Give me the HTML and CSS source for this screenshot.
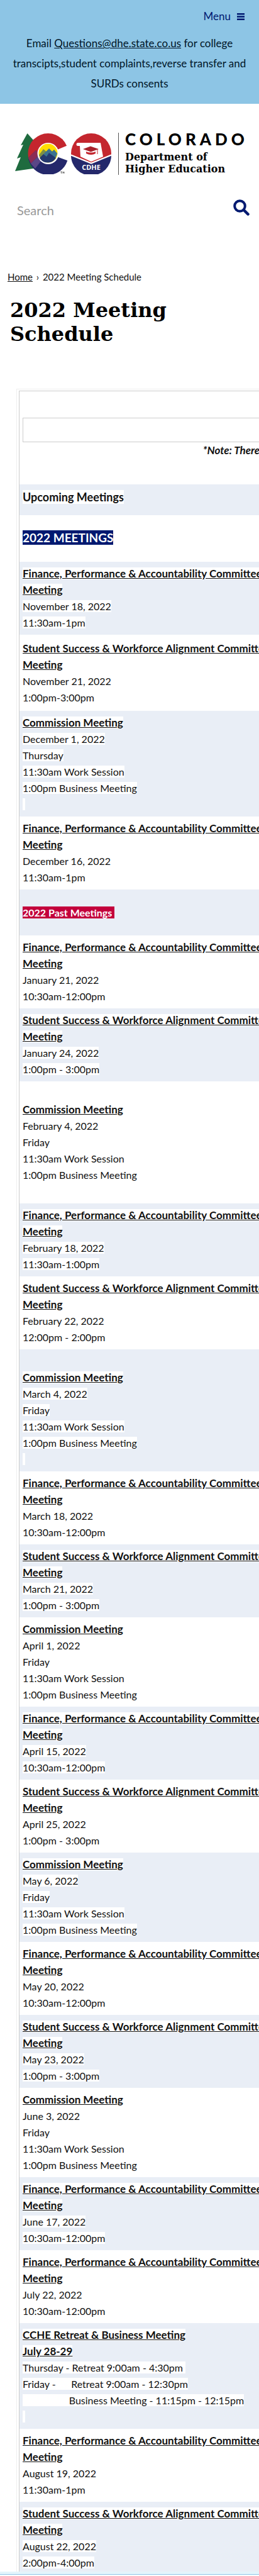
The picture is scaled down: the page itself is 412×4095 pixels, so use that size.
FILE: index.html
```html
<!DOCTYPE html>
<html lang="en">
<head>
<meta charset="utf-8">
<meta name="viewport" content="width=device-width, initial-scale=1">
<title>2022 Meeting Schedule</title>
<link rel="stylesheet" href="styles.css">
</head>
<body>
<header>
  <div class="topbar">
    <button class="menu" type="button">Menu
      <svg width="12" height="11" viewBox="0 0 12 11" aria-hidden="true"><path d="M0 0h12v2.4H0zM0 4.3h12v2.4H0zM0 8.6h12V11H0z" fill="#001970"/></svg>
    </button>
    <p class="notice">Email <a href="mailto:Questions@dhe.state.co.us">Questions@dhe.state.co.us</a> for college transcipts,student complaints,reverse transfer and SURDs consents</p>
  </div>
  <a class="brand" href="#" aria-label="Colorado Department of Higher Education">
    <svg class="marks" viewBox="25 211 155 66" aria-hidden="true">
      <path d="M44.5 212 34 231l4-1-10 22 6-2-9 22 35-5 4-40-7-1z" fill="#1f6b3f"/>
      <circle cx="77.5" cy="244" r="32" fill="#c4262e"/>
      <path d="M46 251 58 239l10 10h42l-2 7a32 32 0 0 1-62-5z" fill="#24286b"/>
      <path d="M46 251 58 239l7 6-15 15z" fill="#8b2c55"/>
      <path d="M50 260 65 245l5 6-13 17z" fill="#5a4686"/>
      <path d="M77.5 244 116 228v30z" fill="#fff"/>
      <circle cx="77.5" cy="244" r="17" fill="#fff"/>
      <circle cx="77.5" cy="243.5" r="15" fill="#fd0"/>
      <path d="M62.5 247 70 237l6 5 3-5 5 4 3-3 5 6a15 15 0 0 1-29 3z" fill="#7d9045"/>
      <path d="M70 245 79 236l5 5 3-3 5 6-4 9H72z" fill="#3c7390"/>
      <path d="M64 251 70 245l5 4 4-6 11 8a15 15 0 0 1-26 0z" fill="#24386e"/>
      <path d="M97 273h3M98.5 273v3M101 276v-3l1 1.5 1-1.5v3" fill="none" stroke="#222" stroke-width=".6"/>
      <circle cx="146" cy="244" r="32" fill="#c4262e"/>
      <path d="M114 247 146 260 178 247a32 32 0 0 1-64 0z" fill="#24286b"/>
      <path d="M114 246.500 146 259.500 178 246.500" fill="none" stroke="#fff" stroke-width="2.2"/>
      <path d="M127 227h34l4 22-19 8-17-8-1-17h-3a2 2 0 0 1 0-5z" fill="#fff"/>
      <path d="M133 237 145 232.500 158 237 145.500 241.500z" fill="#a8222b"/>
      <path d="M138 241q7.500 3 15 0v3q-7 4-15 0z" fill="#c4262e"/>
      <path d="M156 237v8" stroke="#c4262e"/>
      <text class="seal" x="146" y="270" text-anchor="middle">CDHE</text>
    </svg>
    <span class="wordmark"><span class="state">COLORADO</span><span class="dept">Department of<br>Higher Education</span></span>
  </a>
  <form class="search" role="search">
    <input type="search" placeholder="Search" aria-label="Search">
    <button type="submit" aria-label="Submit search"><svg width="26" height="26" viewBox="0 0 26 26"><circle cx="10.500" cy="10.500" r="8.300" fill="none" stroke="#001970" stroke-width="4"/><path d="M17 17l6.500 6.500" stroke="#001970" stroke-width="4.500" stroke-linecap="round"/></svg></button>
  </form>
</header>
<main>
  <nav class="crumbs" aria-label="Breadcrumb"><a href="#">Home</a> <i>›</i> 2022 Meeting Schedule</nav>
  <h1>2022 Meeting<br>Schedule</h1>
  <div class="frame">
    <table>
      <tbody>
        <tr class="intro"><td><div class="blank"></div><p>*Note: There</p></td></tr>
        <tr class="upcoming"><td><strong>Upcoming Meetings</strong></td></tr>
        <tr class="section"><td><h2>2022 MEETINGS</h2></td></tr>
        <tr><td><span><b>Finance, Performance &amp; Accountability Committee<br>Meeting</b><br>November 18, 2022<br>11:30am-1pm</span></td></tr>
        <tr class="spaced"><td><span><b>Student Success &amp; Workforce Alignment Committee<br>Meeting</b><br>November 21, 2022<br>1:00pm-3:00pm</span></td></tr>
        <tr><td><span><b>Commission Meeting</b><br>December 1, 2022<br>Thursday<br>11:30am Work Session<br>1:00pm Business Meeting<br>&nbsp;</span></td></tr>
        <tr><td><span><b>Finance, Performance &amp; Accountability Committee<br>Meeting</b><br>December 16, 2022<br>11:30am-1pm</span></td></tr>
        <tr class="past"><td><h3>2022 Past Meetings&nbsp;</h3></td></tr>
        <tr><td><span><b>Finance, Performance &amp; Accountability Committee<br>Meeting</b><br>January 21, 2022<br>10:30am-12:00pm</span></td></tr>
        <tr><td><span><b>Student Success &amp; Workforce Alignment Committee<br>Meeting</b><br>January 24, 2022<br>1:00pm - 3:00pm</span></td></tr>
        <tr><td><br><span><b>Commission Meeting</b><br>February 4, 2022<br>Friday<br>11:30am Work Session<br>1:00pm Business Meeting<br>&nbsp;</span></td></tr>
        <tr><td><span><b>Finance, Performance &amp; Accountability Committee<br>Meeting</b><br>February 18, 2022<br>11:30am-1:00pm</span></td></tr>
        <tr><td><span><b>Student Success &amp; Workforce Alignment Committee<br>Meeting</b><br>February 22, 2022<br>12:00pm - 2:00pm</span></td></tr>
        <tr><td><br><span><b>Commission Meeting</b><br>March 4, 2022<br>Friday<br>11:30am Work Session<br>1:00pm Business Meeting<br>&nbsp;</span></td></tr>
        <tr><td><span><b>Finance, Performance &amp; Accountability Committee<br>Meeting</b><br>March 18, 2022<br>10:30am-12:00pm</span></td></tr>
        <tr><td><span><b>Student Success &amp; Workforce Alignment Committee<br>Meeting</b><br>March 21, 2022<br>1:00pm - 3:00pm</span></td></tr>
        <tr><td><span><b>Commission Meeting</b><br>April 1, 2022<br>Friday<br>11:30am Work Session<br>1:00pm Business Meeting</span></td></tr>
        <tr><td><span><b>Finance, Performance &amp; Accountability Committee<br>Meeting</b><br>April 15, 2022<br>10:30am-12:00pm</span></td></tr>
        <tr><td><span><b>Student Success &amp; Workforce Alignment Committee<br>Meeting</b><br>April 25, 2022<br>1:00pm - 3:00pm</span></td></tr>
        <tr><td><span><b>Commission Meeting</b><br>May 6, 2022<br>Friday<br>11:30am Work Session<br>1:00pm Business Meeting</span></td></tr>
        <tr><td><span><b>Finance, Performance &amp; Accountability Committee<br>Meeting</b><br>May 20, 2022<br>10:30am-12:00pm</span></td></tr>
        <tr><td><span><b>Student Success &amp; Workforce Alignment Committee<br>Meeting</b><br>May 23, 2022<br>1:00pm - 3:00pm</span></td></tr>
        <tr><td><span><b>Commission Meeting</b><br>June 3, 2022<br>Friday<br>11:30am Work Session<br>1:00pm Business Meeting</span></td></tr>
        <tr><td><span><b>Finance, Performance &amp; Accountability Committee<br>Meeting</b><br>June 17, 2022<br>10:30am-12:00pm</span></td></tr>
        <tr><td><span><b>Finance, Performance &amp; Accountability Committee<br>Meeting</b><br>July 22, 2022<br>10:30am-12:00pm</span></td></tr>
        <tr><td><span><b>CCHE Retreat &amp; Business Meeting<br>July 28-29</b><br>Thursday - Retreat 9:00am - 4:30pm&nbsp;<br>Friday - &nbsp; &nbsp; &nbsp;Retreat 9:00am - 12:30pm<br>&nbsp; &nbsp; &nbsp; &nbsp; &nbsp; &nbsp; &nbsp; &nbsp; &nbsp; Business Meeting - 11:15pm - 12:15pm<br>&nbsp;</span></td></tr>
        <tr><td><span><b>Finance, Performance &amp; Accountability Committee<br>Meeting</b><br>August 19, 2022<br>11:30am-1pm</span></td></tr>
        <tr class="last"><td><span><b>Student Success &amp; Workforce Alignment Committee<br>Meeting</b><br>August 22, 2022<br>2:00pm-4:00pm</span></td></tr>
      </tbody>
    </table>
  </div>
</main>
<footer></footer>
</body>
</html>
```

FILE: styles.css
```css
* { box-sizing: border-box; }
body {
  margin: 0;
  background: #fff;
  color: #111;
  font: 16px/26px "Trebuchet MS", Lato, sans-serif;
}
a { color: inherit; }
button { border: 0; padding: 0; background: none; font: inherit; cursor: pointer; }
h1, h2, h3, p { margin: 0; }

.topbar { background: #8dc5e5; padding: 13px 16px 16px; display: flex; flex-direction: column; }
.menu { align-self: flex-end; display: flex; align-items: center; gap: 10px; margin-right: 7px; color: #001970; font-size: 17px; }
.notice { margin-top: 14px; font-size: 17px; line-height: 32px; text-align: center; color: #001528; }

.brand { display: flex; align-items: stretch; padding: 46px 16px 0 24px; color: #000; text-decoration: none; }
.marks { width: 155px; height: 66px; flex: none; }
.seal { font: bold 11px "Open Sans", sans-serif; fill: #fff; }
.wordmark { display: flex; flex-direction: column; margin-left: 9px; padding-left: 10px; border-left: 1px solid #555; }
.state { font: 900 26px/20px Lato, sans-serif; letter-spacing: 6px; }
.dept { margin-top: 9px; font: bold 16px/19px "DejaVu Serif", serif; white-space: nowrap; }

.search { display: flex; align-items: center; justify-content: space-between; padding: 32px 15px 0 27px; }
.search input { flex: 1; min-width: 0; border: 0; padding: 8px 0 0; background: none; font: 20px/32px "Trebuchet MS", Lato, sans-serif; color: #333; outline: 0; }
.search input::placeholder { color: #999; opacity: 1; }
.search svg { display: block; }

.crumbs { margin: 77px 12px 0; font-size: 15px; }
.crumbs i { margin: 0 2px; font-style: normal; }
h1 { margin: 21px 16px 0; font: bold 32px/38px "DejaVu Serif", serif; color: #000; }

.frame { margin: 68px 0 0 26px; border: solid #eee; border-width: 1px 0 0 1px; padding: 2px 0 0 3px; overflow: hidden; }
table { width: 100%; min-width: 676px; border-spacing: 0; border: 1px solid #ccc; border-bottom: 0; }
td { padding: 6px 5px; white-space: nowrap; }
tr:nth-child(even) { background: #e9eef6; }
td span, .upcoming strong { background: #fff; }
b { font-size: 17px; text-decoration: underline; }

.intro td { padding-top: 42px; padding-bottom: 41px; }
.intro p { font-size: 17px; text-align: center; font-weight: bold; font-style: italic; }
.blank { height: 39px; border: 1px solid #ccc; border-right: 0; }
.upcoming td { padding: 7px 5px 16px; font-size: 18px; }
.section td { padding: 24px 5px; }
h2, h3 { display: inline-block; color: #fff; font-weight: bold; }
h2 { background: #001970; font-size: 19px; line-height: 23px; }
h3 { background: #c3003c; font-size: 16px; line-height: 19px; }
.past td { padding: 24px 5px 23px; }
.spaced td { padding: 9px 5px 8px; }
.last td { padding-bottom: 1px; }

footer { height: 5px; background: #e3f5fc; border-bottom: 1px solid #8dc5e5; }
```
